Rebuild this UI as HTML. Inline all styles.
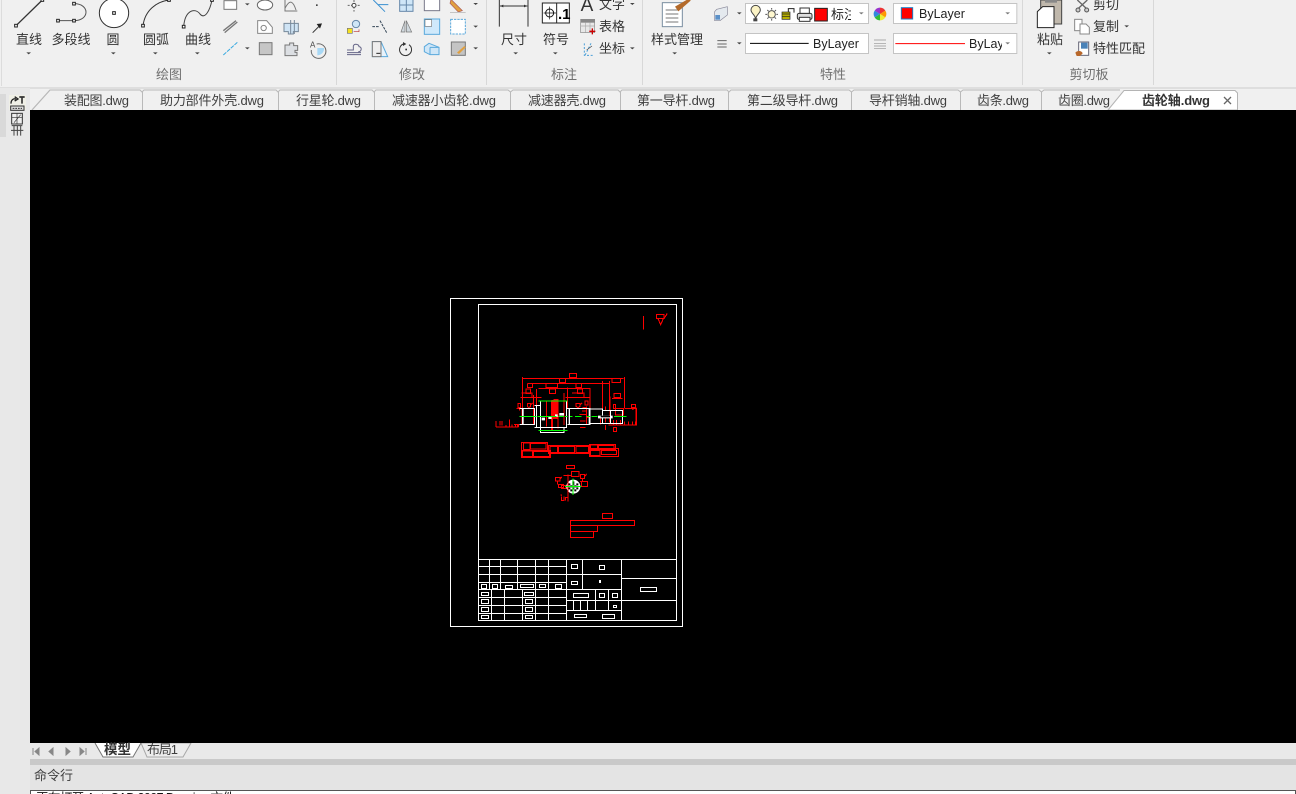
<!DOCTYPE html>
<html><head><meta charset="utf-8"><style>
html,body{margin:0;padding:0;width:1296px;height:794px;overflow:hidden;background:#f0f0f0}
svg{display:block;font-family:"Liberation Sans","Noto Sans CJK SC",sans-serif}
.l{font-size:13px;fill:#333;text-anchor:middle}
.p{font-size:13px;fill:#707070;text-anchor:middle}
.t{font-size:13px;fill:#3f3f3f}
.s{font-size:13px;fill:#333}
.w{fill:none;stroke:#fff;stroke-width:1;shape-rendering:crispEdges}
.rr{fill:none;stroke:#f00;stroke-width:3.300;shape-rendering:crispEdges}
.ww{fill:none;stroke:#fff;stroke-width:3.300;shape-rendering:crispEdges}
.g{fill:none;stroke:#0f0;stroke-width:3.300;shape-rendering:crispEdges}
.ic{fill:none;stroke:#555;stroke-width:3}
.h{fill:#fff;stroke:#222;stroke-width:3}
.a{fill:#444}
</style></head><body>
<svg width="1296" height="794" viewBox="0 0 1296 794" xmlns="http://www.w3.org/2000/svg">
<rect width="1296" height="794" fill="#f0f0f0"/>
<!-- ribbon lines -->
<rect x="1" y="0" width="1" height="86" fill="#dcdcdc"/>
<rect x="336" y="0" width="1" height="85" fill="#d8d8d8"/>
<rect x="486" y="0" width="1" height="85" fill="#d8d8d8"/>
<rect x="642" y="0" width="1" height="85" fill="#d8d8d8"/>
<rect x="1022" y="0" width="1" height="85" fill="#d8d8d8"/>
<rect x="1153" y="0" width="1" height="85" fill="#d8d8d8"/>
<rect x="0" y="87" width="1296" height="2" fill="#dedede"/>

<!-- draw panel icons -->
<g>
<g transform="scale(.33333)">
<path d="M48 77 L127 0" stroke="#333" stroke-width="4" fill="none"/>
<rect class="h" x="44" y="73" width="8" height="8"/><rect class="h" x="123" y="-4" width="8" height="8"/>
<path d="M174 62H222M222 11C270 11 270 62 222 62" class="ic" stroke="#333"/>
<rect class="h" x="170" y="58" width="8" height="8"/><rect class="h" x="218" y="58" width="8" height="8"/><rect class="h" x="218" y="7" width="8" height="8"/>
<circle cx="342" cy="39" r="44" fill="#fff" stroke="#333" stroke-width="3"/><rect class="h" x="338" y="35" width="8" height="8"/>
<path d="M429 77C435 30 470 5 507 0" fill="none" stroke="#333" stroke-width="3"/><rect class="h" x="425" y="73" width="8" height="8"/><rect class="h" x="503" y="-4" width="8" height="8"/>
<path d="M551 80C555 30 585 22 600 42C615 60 630 30 636 0" fill="none" stroke="#444" stroke-width="3"/><rect class="h" x="547" y="76" width="8" height="8"/><rect class="h" x="632" y="-4" width="8" height="8"/>
<path d="M79 157h14l-7 6zM333 157h14l-7 6zM459 157h14l-7 6zM585 157h14l-7 6zM735 10h14l-7 6zM735 142h14l-7 6z" class="a"/>
<!-- small draw -->
<rect x="672" y="2" width="38" height="26" fill="#fff" stroke="#777" stroke-width="3"/>
<ellipse cx="795" cy="15" rx="23" ry="15" fill="#fff" stroke="#666" stroke-width="3"/>
<path d="M855 0V33H892M855 25C870 -5 880 5 888 30" fill="none" stroke="#777" stroke-width="3"/>
<rect x="948" y="13" width="5" height="5" fill="#444"/>
<path d="M670 92L708 62M674 98L712 66" stroke="#777" stroke-width="4" fill="none"/>
<path d="M773 62H800L817 82V100H773Z" fill="#fff" stroke="#888" stroke-width="3"/><circle cx="791" cy="84" r="8" fill="none" stroke="#888" stroke-width="3"/>
<path d="M852 70H895V95H880V102H865V95H852Z" fill="#cfe4f5" stroke="#789" stroke-width="3"/><path d="M872 60V102M883 60V102" stroke="#789" stroke-width="3"/>
<path d="M938 98L958 78" stroke="#333" stroke-width="3"/><path d="M950 72L966 70L960 86Z" fill="#222"/>
<path d="M670 165L712 127" stroke="#35a8e0" stroke-width="3" stroke-dasharray="12 3" fill="none"/>
<rect x="778" y="128" width="38" height="36" fill="#c6c6c6" stroke="#777" stroke-width="3"/>
<path d="M855 135h14v-6h12v8h12v14h-8v6h6v10h-36z" fill="#dcdfe3" stroke="#777" stroke-width="3"/>
<path d="M950 132A22 22 0 1 1 934 150" fill="none" stroke="#666" stroke-width="3"/><path d="M952 144H972A20 20 0 0 1 952 166Z" fill="#a8d8f5"/>
<text x="930" y="142" font-size="24" fill="#444">A</text>
</g>
<text class="l" x="29" y="44">直线</text><text class="l" x="71" y="44">多段线</text><text class="l" x="113" y="44">圆</text><text class="l" x="156" y="44">圆弧</text><text class="l" x="198" y="44">曲线</text>
<text class="p" x="169" y="79">绘图</text><text class="p" x="412" y="79">修改</text><text class="p" x="564" y="79">标注</text><text class="p" x="833" y="79">特性</text><text class="p" x="1089" y="79">剪切板</text>
</g>

<!-- modify + annot icons -->
<g transform="translate(335,0) scale(.33333)">
<path d="M57 0V35M38 16H76" stroke="#666" stroke-width="3" stroke-dasharray="6 4"/><circle cx="57" cy="16" r="6" fill="#fff" stroke="#444" stroke-width="3"/>
<path d="M115 0L150 35M130 14H160" stroke="#3a8fd0" stroke-width="3" fill="none"/>
<rect x="194" y="-4" width="40" height="38" fill="#cfe6f7" stroke="#68a" stroke-width="3"/><path d="M214 -4V34M194 15H234" stroke="#68a" stroke-width="3"/>
<rect x="268" y="-4" width="46" height="36" fill="#fff" stroke="#778" stroke-width="3"/>
<path d="M348 -2L382 32L370 36L345 10Z" fill="#e0a040" stroke="#a55" stroke-width="2"/><path d="M345 37H392" stroke="#aaa" stroke-width="2"/>
<path d="M415 9h14l-7 6zM415 77h14l-7 6zM415 142h14l-7 6z" class="a"/>
<circle cx="63" cy="72" r="11" fill="#cfe6f7" stroke="#68a" stroke-width="3"/><rect x="37" y="85" width="15" height="15" fill="#f5e020" stroke="#777" stroke-width="2"/><path d="M56 95H72V88" stroke="#b33" stroke-width="2" fill="none"/>
<path d="M112 80H132M135 62L155 98" stroke="#345" stroke-width="3" stroke-dasharray="8 3" fill="none"/>
<path d="M198 96L210 62V96ZM214 62L230 96H214Z" fill="#d0d8de" stroke="#777" stroke-width="2"/>
<rect x="268" y="57" width="46" height="46" fill="#cfe9fb" stroke="#5aa9dc" stroke-width="3"/><rect x="270" y="59" width="20" height="20" fill="#fff" stroke="#777" stroke-width="2"/>
<rect x="347" y="58" width="44" height="44" fill="#fff" stroke="#5aa9dc" stroke-width="3" stroke-dasharray="7 3"/>
<path d="M36 150H55V138C58 130 72 132 72 140C82 142 80 155 70 155M36 158H78M36 164H78" fill="none" stroke="#668" stroke-width="3"/>
<path d="M112 125H138L158 170H112Z" fill="#e8f3fb" stroke="#5aa9dc" stroke-width="3"/><path d="M112 125H138V170H112Z" fill="#eee" stroke="#777" stroke-width="3"/><path d="M124 160H136" stroke="#222" stroke-width="3"/>
<path d="M205 132A18 18 0 1 0 222 134" fill="none" stroke="#333" stroke-width="3"/><path d="M204 126L214 132L204 138Z" fill="#333"/><rect x="211" y="146" width="5" height="5" fill="#333"/>
<path d="M268 140L282 130L312 142V164H285L268 155Z" fill="#cfe6f7" stroke="#5aa9dc" stroke-width="3"/><path d="M285 142H312M285 142V164" stroke="#5aa9dc" stroke-width="3"/>
<rect x="349" y="126" width="42" height="40" fill="#c4c4c4" stroke="#777" stroke-width="3"/><path d="M366 158L388 138L392 142L372 162Z" fill="#e0a040"/>
<!-- dim -->
<path d="M493 0V80M579 0V80" stroke="#333" stroke-width="3"/><path d="M495 18H577" stroke="#333" stroke-width="3"/><path d="M495 18l10-4v8zM577 18l-10-4v8z" fill="#333"/>
<rect x="622" y="9" width="81" height="60" fill="#fff" stroke="#222" stroke-width="3"/><path d="M665 9V69" stroke="#222" stroke-width="3"/>
<circle cx="644" cy="39" r="12" fill="none" stroke="#111" stroke-width="3"/><path d="M644 20V58M626 39H663" stroke="#111" stroke-width="2"/>
<rect x="737" y="58" width="42" height="40" fill="#e8e8e8" stroke="#888" stroke-width="2"/><rect x="737" y="58" width="42" height="10" fill="#888"/><path d="M737 78H779M751 68V98M765 68V98" stroke="#aaa" stroke-width="2"/><path d="M763 94H781M772 85V103" stroke="#c00" stroke-width="4"/>
<path d="M748 130v36h30M768 130l-18 36" stroke="#4a9fd8" stroke-width="3" stroke-dasharray="6 5" fill="none"/><path d="M755 150l16 -12" stroke="#444" stroke-width="2"/>
<path d="M535 157h14l-7 6zM654 157h14l-7 6zM885 9h14l-7 6zM885 142h14l-7 6zM1012 157h14l-7 6z" class="a"/>
<!-- style -->
<rect x="982" y="8" width="60" height="72" fill="#fff" stroke="#7a8ea0" stroke-width="3"/><path d="M992 30H1030M992 42H1030M992 54H1030M992 66H1030" stroke="#777" stroke-width="3"/>
</g>
<text x="587" y="11" fill="#333" text-anchor="middle" style="font-size:19px">A</text>
<text class="s" x="599" y="9">文字</text><text class="s" x="599" y="31">表格</text><text class="s" x="599" y="53">坐标</text>
<text class="l" x="514" y="44">尺寸</text><text class="l" x="556" y="44">符号</text>
<text x="558" y="19" font-size="15" font-weight="bold" fill="#000">.1</text>
<text class="l" x="677" y="44">样式管理</text>

<!-- style brush -->
<g transform="translate(670,0) scale(.33333)">
<path d="M15 20L58 -5L62 2L25 34Z" fill="#b36a2a"/>
<path d="M140 28L172 20V45L150 62H134V35Z" fill="#e4e9ee" stroke="#889" stroke-width="2"/><rect x="136" y="45" width="14" height="14" fill="#5a90c8"/>
<path d="M201 37h14l-7 6zM201 127h14l-7 6z" class="a"/>
<rect x="226.500" y="10.500" width="369" height="60" fill="#fff" stroke="#c4c4c4" stroke-width="3"/>
<path d="M256 55C256 45 243 40 243 30A14 14 0 0 1 271 30C271 40 258 45 258 55Z" fill="#fbf3c5" stroke="#444" stroke-width="3"/><rect x="250" y="55" width="12" height="9" fill="#444"/>
<circle cx="305" cy="43" r="11" fill="#fff8d0" stroke="#555" stroke-width="3"/><path d="M305 24V29M305 57V62M286 43H291M319 43H324M292 30L296 34M318 30L314 34M292 56L296 52M318 56L314 52" stroke="#555" stroke-width="3"/>
<rect x="336" y="36" width="24" height="22" fill="#b8b000" stroke="#222" stroke-width="2"/><path d="M336 42H360M336 49H360" stroke="#222" stroke-width="2"/><path d="M355 36V26H372V38" fill="none" stroke="#222" stroke-width="3"/>
<rect x="382" y="40" width="44" height="18" rx="5" fill="#ddd" stroke="#333" stroke-width="3"/><rect x="390" y="24" width="28" height="16" fill="#fff" stroke="#333" stroke-width="3"/><rect x="388" y="52" width="32" height="12" fill="#fff" stroke="#333" stroke-width="3"/>
<rect x="434" y="25" width="38" height="38" fill="#f00" stroke="#222" stroke-width="3"/>
<path d="M567 37h14l-7 6zM567 127h14l-7 6z" fill="#777"/>
<circle cx="630" cy="42" r="19" fill="#ddd"/>
<path d="M630 42V23A19 19 0 0 1 646 32Z" fill="#e33"/><path d="M630 42L646 32A19 19 0 0 1 646 52Z" fill="#f90"/><path d="M630 42L646 52A19 19 0 0 1 630 61Z" fill="#ee3"/><path d="M630 42V61A19 19 0 0 1 614 52Z" fill="#3b3"/><path d="M630 42L614 52A19 19 0 0 1 614 32Z" fill="#38d"/><path d="M630 42L614 32A19 19 0 0 1 630 23Z" fill="#93c"/>
<rect x="670.500" y="10.500" width="370" height="60" fill="#fff" stroke="#c4c4c4" stroke-width="3"/>
<rect x="694" y="23" width="34" height="34" fill="#f00" stroke="#1a7fc8" stroke-width="3"/>
<path d="M142 122H170M142 132H170M142 141H170" stroke="#666" stroke-width="3"/>
<rect x="226.500" y="100.500" width="369" height="60" fill="#fff" stroke="#c4c4c4" stroke-width="3"/>
<path d="M240 130H416" stroke="#000" stroke-width="3"/>
<path d="M613 120H648M613 130H648M613 138H648M613 145H648" stroke="#666" stroke-width="2" stroke-dasharray="4 2"/>
<rect x="670.500" y="100.500" width="370" height="60" fill="#fff" stroke="#c4c4c4" stroke-width="3"/>
<path d="M676 131H885" stroke="#f00" stroke-width="3"/>
<path d="M1006 37h14l-7 6zM1006 127h14l-7 6z" fill="#777"/>
</g>
<svg x="830" y="3" width="21" height="22"><text x="1" y="16" class="s" style="fill:#222">标注</text></svg>
<text x="919" y="18" fill="#222" style="font-size:12.500px">ByLayer</text>
<text x="813" y="48" fill="#222" style="font-size:12.500px">ByLayer</text>
<svg x="968" y="33" width="34" height="22"><text x="1" y="15" fill="#222" style="font-size:12.500px">ByLayer</text></svg>

<!-- clipboard -->
<g transform="translate(1000,0) scale(.33333)">
<path d="M122 0V72H185V0Z" fill="#c0b8ac" stroke="#444" stroke-width="3"/><rect x="135" y="0" width="36" height="8" fill="#888"/>
<path d="M112 35L128 20H162V83H112Z" fill="#fff" stroke="#222" stroke-width="3"/>
<path d="M141 157h14l-7 6zM373 76h14l-7 6z" class="a"/>
<path d="M232 0L262 28M262 0L232 28" stroke="#666" stroke-width="4"/><circle cx="234" cy="30" r="6" fill="#ccc" stroke="#555" stroke-width="3"/><circle cx="260" cy="30" r="6" fill="#ccc" stroke="#555" stroke-width="3"/>
<rect x="224" y="58" width="22" height="34" fill="#fff" stroke="#888" stroke-width="3"/><path d="M240 72H258L268 82V102H240Z" fill="#fff" stroke="#888" stroke-width="3"/>
<rect x="236" y="126" width="30" height="40" fill="#fff" stroke="#667" stroke-width="3"/><rect x="243" y="128" width="20" height="18" fill="#4a82b8"/><path d="M226 158C232 150 246 152 248 160L240 168H230Z" fill="#b8672a"/>
</g>
<text class="s" x="1093" y="9">剪切</text><text class="s" x="1093" y="31">复制</text><text class="s" x="1093" y="53">特性匹配</text>
<text class="l" x="1050" y="44">粘贴</text>

<!-- tab strip -->
<path d="M32 110L50 90H1237V110Z" fill="#f0f0f0"/>
<path d="M32 110L50 90H140L142 92L144 90H276L278 92L280 90H372L374 92L376 90H508L510.500 92L513 90H618L620 92L622 90H727L729 92L731 90H849L851.500 92L854 90H958L960.500 92L963 90H1039L1041.500 92L1044 90H1120" fill="none" stroke="#b9b9b9"/>
<path d="M142.500 92V110M278.500 92V110M374.500 92V110M510.500 92V110M620.500 92V110M728.500 92V110M851.500 92V110M960.500 92V110M1041.500 92V110" stroke="#b9b9b9"/>
<path d="M1108 110L1124 90.500H1235L1237.500 93V110Z" fill="#fff" stroke="#b4b4b4"/>
<text class="t" x="64" y="105" textLength="65">装配图.dwg</text>
<text class="t" x="160" y="105" textLength="104">助力部件外壳.dwg</text>
<text class="t" x="296" y="105" textLength="65">行星轮.dwg</text>
<text class="t" x="392" y="105" textLength="104">减速器小齿轮.dwg</text>
<text class="t" x="528" y="105" textLength="78">减速器壳.dwg</text>
<text class="t" x="637" y="105" textLength="78">第一导杆.dwg</text>
<text class="t" x="747" y="105" textLength="91">第二级导杆.dwg</text>
<text class="t" x="869" y="105" textLength="78">导杆销轴.dwg</text>
<text class="t" x="977" y="105" textLength="52">齿条.dwg</text>
<text class="t" x="1058" y="105" textLength="52">齿圈.dwg</text>
<text class="t" x="1142" y="105" textLength="68" font-weight="bold" style="fill:#333">齿轮轴.dwg</text>
<path d="M1224 97L1231 104M1231 97L1224 104" stroke="#666" stroke-width="1.300"/>

<!-- sidebar -->
<rect x="0" y="88" width="30" height="706" fill="#e8e8e8"/>
<rect x="0" y="94" width="6" height="43" fill="#d9d9d9"/>
<path d="M32 110L50 90" stroke="#b9b9b9" fill="none"/>
<rect x="9" y="95" width="17" height="15" fill="#efefe6"/>
<g transform="translate(0,85) scale(.33333)">
<path d="M33 56C33 44 40 40 48 42M44 35L54 42L44 48" fill="none" stroke="#222" stroke-width="4"/><path d="M58 36H74M66 36V56" stroke="#333" stroke-width="5"/>
<rect x="32" y="63" width="40" height="13" fill="#ddd" stroke="#333" stroke-width="3"/><path d="M38 70H66" stroke="#333" stroke-width="3" stroke-dasharray="5 3"/>
<rect x="35" y="85" width="32" height="32" fill="#eee" stroke="#333" stroke-width="3"/><path d="M35 97H67M51 85V117M42 113L62 89" stroke="#333" stroke-width="2"/>
<path d="M35 122H67M42 122V152M52 122V152M62 122V152M33 136H70" stroke="#444" stroke-width="3"/>
</g>

<!-- canvas -->
<rect x="30" y="110" width="1266" height="633" fill="#000"/>
<rect class="w" x="450.500" y="298.500" width="232" height="328"/>
<rect class="w" x="478.500" y="304.500" width="198" height="316"/>
<!-- top right mark -->
<g transform="translate(630,300) scale(.33333)">
<path d="M40 48V88M80 44H102V56H80ZM84 56L92 74L100 56M102 56L112 40" class="rr"/>
</g>
<!-- title block -->
<g class="w">
<path d="M478.500 559.500H676.500M478.500 566.500H566.500M478.500 574.500H621M478.500 582.500H566.500M478.500 589.500H621M478.500 597.500H566.500M478.500 605.500H566.500M478.500 613.500H566.500"/>
<path d="M489.500 559.500V589.500M500.500 559.500V589.500M517.500 559.500V589.500M535.500 559.500V620.500M548.500 559.500V620.500"/>
<path d="M491.500 589.500V620.500M504.500 589.500V620.500M522.500 589.500V620.500"/>
<path d="M566.500 559.500V620.500M621.500 559.500V620.500M582.500 559.500V589.500M566.500 600.500H621.500M566.500 610.500H621.500M595.500 589.500V610.500M608.500 589.500V610.500M573.500 600.500V610.500M580.500 600.500V610.500M587.500 600.500V610.500M621.500 578.500H676.500M621.500 600.500H676.500"/>
<rect x="481.500" y="584.500" width="5" height="4"/><rect x="492.500" y="584.500" width="5" height="4"/><rect x="505.500" y="585.500" width="7" height="3"/><rect x="520.500" y="584.500" width="13" height="3"/><rect x="539.500" y="584.500" width="6" height="3"/><rect x="555.500" y="584.500" width="6" height="4"/>
<rect x="481.500" y="592.500" width="7" height="3"/><rect x="481.500" y="599.500" width="7" height="4"/><rect x="481.500" y="607.500" width="7" height="4"/><rect x="481.500" y="615.500" width="7" height="3"/>
<rect x="524.500" y="592.500" width="9" height="3"/><rect x="525.500" y="599.500" width="7" height="4"/><rect x="525.500" y="607.500" width="7" height="4"/><rect x="525.500" y="615.500" width="7" height="3"/>
<rect x="571.500" y="564.500" width="6" height="4"/><rect x="599.500" y="565.500" width="5" height="4"/><rect x="571.500" y="581.500" width="6" height="3"/>
<rect x="573.500" y="593.500" width="15" height="4"/><rect x="599.500" y="593.500" width="5" height="4"/><rect x="612.500" y="593.500" width="5" height="4"/><rect x="613.500" y="605.500" width="3" height="2"/>
<rect x="574.500" y="614.500" width="12" height="3"/><rect x="602.500" y="614.500" width="12" height="4"/>
<rect x="640.500" y="587.500" width="16" height="4"/>
</g>
<rect x="599" y="580" width="2" height="3" fill="#fff"/>
<!-- main view -->
<g transform="translate(490,365) scale(.33333)">
<path class="rr" d="M238 25H260V38H238ZM98 40H400M98 36V170M208 40V52H226V40M112 55H360M112 55V68H128V55M168 55V68H202V55M258 55V68H275V55M366 40V52H392V40M403 36V130"/>
<path class="rr" d="M108 72H122V85H108ZM140 72V150M178 72H196V85H178ZM262 72H278V85H262ZM146 70H300V130M92 98H154M94 84H126V98M246 84H282V98H246M232 68V130M226 98H302"/>
<path class="rr" d="M337 48V130M358 48V135M372 85H392V98H372ZM366 100H398M370 118H377V130H370ZM285 108H294V120H285ZM360 95V170M376 130H400V150H376ZM405 130H440V180H355M424 118H436V128H424ZM430 128L428 135"/>
<path class="rr" d="M18 186H86M18 168V186M30 168V182M36 168V182M48 180V186M58 164V186M66 178V186M72 178H86V186M76 178V186M82 178V186M84 115H92V128H84ZM80 130H92M88 128V136M112 115H122V124L116 128L112 124ZM122 120L128 114M258 115H270V124L264 128L258 124ZM270 120L276 114"/>
<path class="rr" d="M96 130V178M130 90V178H98M152 110V190M170 106V185M184 106V196H188V106M190 104H204V190M222 84V180M290 125V178M278 128H290M268 148H290M270 168H286M270 178H286M270 188H286M276 138H290M288 158H296"/>
<path class="rr" d="M332 155V178M346 125V135M346 155V172M358 150V172M370 165V178M380 165V178M392 165V178M404 170V180M415 170V180M428 170V180M436 170V180M438 128V178M346 180V195M370 187H380V200H370Z"/>
<path d="M184 105H204V162H184Z" fill="#f00"/>
<path class="ww" d="M140 122V188H152V108H230V188H152V202H222V188M230 130H300V178H232M300 132H337V176H300M337 136H362V176H337M362 136H398V176H362M398 136V176M140 122H152M88 130H98V178H88M98 130H134V178H98M134 122H140V188H134"/>
<path d="M96 130h5v48h-5zM236 130h4v48h-4zM296 130h4v48h-4zM324 152h44v8h-44z" fill="#fff"/>
<rect x="332" y="152" width="28" height="5" fill="#000"/>
<path d="M155 158h10v8h-10zM175 156h10v6h-10zM195 148h8v8h-8zM208 144h14v8h-14z" fill="#fff"/>
<path class="g" d="M145 108H232M145 196H232M88 154H140M142 154H200M205 154H222M225 154H232M240 154H248M255 154H275M290 154H300M305 154H322M372 154H410"/>
<!-- second view -->
<path d="M95 232H172V256H95ZM95 256H182V277H95ZM100 234H120V254H100ZM122 236H168V252H122ZM98 258H128V275H98ZM130 260H178V275H130ZM176 242H298V265H176ZM180 244H202V263H180ZM206 245H254V262H206ZM258 245H296V262H258ZM298 238H376V254H298ZM298 250H386V274H298ZM302 240H322V252H302ZM326 242H372V252H326ZM302 256H330V272H302ZM334 256H380V268H334Z" fill="none" stroke="#f00" stroke-width="3.300" shape-rendering="crispEdges"/>
</g>
<!-- section -->
<g transform="translate(530,455) scale(.33333)">
<path class="rr" d="M109 31H134V41H109ZM124 49H147V64H124ZM76 68H90V78H76ZM82 78V88M90 72L95 66M151 59H164V70H151ZM158 70V78M164 64L170 57M85 88H100V98H85ZM94 92H108V100H94ZM155 80H172V94H155ZM150 80H173M150 94H173M100 62H124M114 58V140M94 125V136H102V125M106 136V128H114M95 122L92 118"/>
<circle cx="130" cy="95" r="21" fill="#fff"/>
<path d="M115 85h6v6h-6zM127 85h6v6h-6zM139 85h6v6h-6zM121 91h6v6h-6zM133 91h6v6h-6zM115 97h6v6h-6zM127 97h6v6h-6zM139 97h6v6h-6zM121 103h6v6h-6zM133 103h6v6h-6zM127 79h6v6h-6z" fill="#000"/>
<path class="rr" d="M114 72V120M108 95H150"/>
<path class="g" d="M129 70V120M105 95H154"/>
</g>
<!-- red table in pixel coordinates -->
<path d="M602.500 513.500H612.500V518.500H602.500ZM570.500 520.500H634.500V525.500H570.500ZM570.500 525.500H597.500V531.500H570.500ZM570.500 531.500H593.500V537.500H570.500Z" fill="none" stroke="#f00" stroke-width="1.300" shape-rendering="crispEdges"/>

<!-- bottom -->
<rect x="30" y="743" width="1266" height="16" fill="#e9e9e9"/>
<rect x="30" y="759" width="1266" height="6" fill="#c9c9c9"/>
<rect x="30" y="765" width="1266" height="25" fill="#e4e4e4"/>
<rect x="30.500" y="790.500" width="1265" height="10" fill="#fff" stroke="#555"/>
<text x="36" y="802" textLength="199" style="font-size:12.500px;fill:#111">正在打开 AutoCAD 2007 Drawing 文件</text>
<path d="M33 748V755M39 748L35 751.500L39 755ZM49 751.500L53 748V755ZM66 748L70 751.500L66 755ZM80 748L84 751.500L80 755ZM86 748V755" fill="#888" stroke="#888" stroke-width="1"/>
<path d="M141 743L147 757H183L191 743Z" fill="#ececec" stroke="#a8a8a8"/>
<path d="M95 743L103 757H133L141 743" fill="#fff" stroke="#777"/>
<rect x="30" y="742" width="1266" height="1" fill="#000"/>
<text x="104" y="754" font-weight="bold" style="font-size:13.500px" fill="#333">模型</text>
<text x="147" y="754" class="t" textLength="31">布局1</text>
<text x="34" y="780" class="t" textLength="39">命令行</text>
</svg>
</body></html>
